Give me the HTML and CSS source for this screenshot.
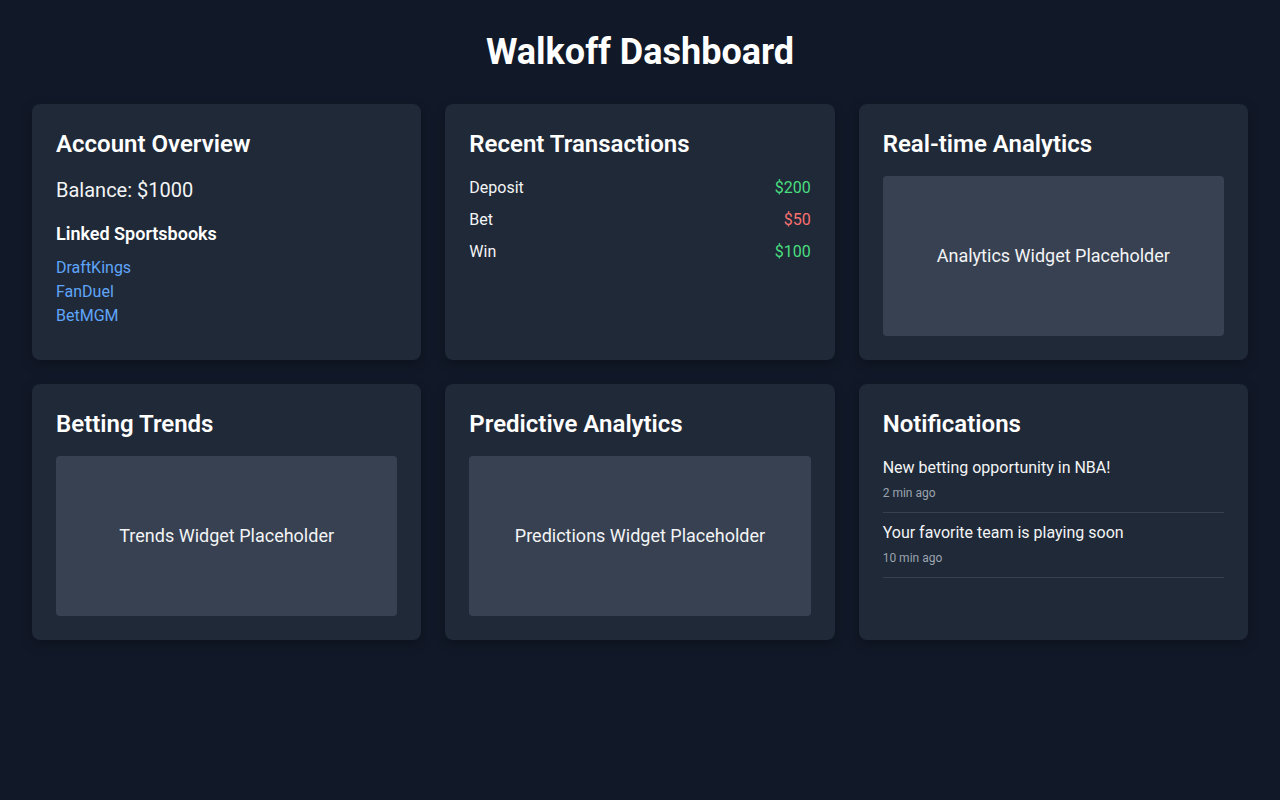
FILE: index.html
```html
<!DOCTYPE html>
<html lang="en">
<head>
    <meta charset="UTF-8">
    <meta name="viewport" content="width=device-width, initial-scale=1.0">
    <title>Walkoff Dashboard</title>
    <link rel="stylesheet" href="styles.css">
</head>
<body>
    <div class="page">
        <h1 class="page-title">Walkoff Dashboard</h1>

        <div class="grid">
            <!-- Account -->
            <div class="card">
                <h2>Account Overview</h2>
                <p class="balance">Balance: $1000</p>
                <h3>Linked Sportsbooks</h3>
                <ul class="book-list">
                    <li><a href="#">DraftKings</a></li>
                    <li><a href="#">FanDuel</a></li>
                    <li><a href="#">BetMGM</a></li>
                </ul>
            </div>

            <!-- Transactions -->
            <div class="card">
                <h2>Recent Transactions</h2>
                <ul class="tx-list">
                    <li><span>Deposit</span><span class="plus">$200</span></li>
                    <li><span>Bet</span><span class="minus">$50</span></li>
                    <li><span>Win</span><span class="plus">$100</span></li>
                </ul>
            </div>

            <div class="card">
                <h2>Real-time Analytics</h2>
                <div class="widget">Analytics Widget Placeholder</div>
            </div>

            <div class="card">
                <h2>Betting Trends</h2>
                <div class="widget">Trends Widget Placeholder</div>
            </div>

            <div class="card">
                <h2>Predictive Analytics</h2>
                <div class="widget">Predictions Widget Placeholder</div>
            </div>

            <!-- Notifications -->
            <div class="card">
                <h2>Notifications</h2>
                <ul class="notif-list">
                    <li>
                        <p>New betting opportunity in NBA!</p>
                        <span class="time">2 min ago</span>
                    </li>
                    <li>
                        <p>Your favorite team is playing soon</p>
                        <span class="time">10 min ago</span>
                    </li>
                </ul>
            </div>
        </div>
    </div>
</body>
</html>
```

FILE: styles.css
```css
* {
    margin: 0;
    padding: 0;
    box-sizing: border-box;
}

body {
    font-family: Roboto, "Liberation Sans", sans-serif;
    line-height: 1.5;
    background-color: #111827;
    color: #f3f4f6;
    min-height: 100vh;
}

.page {
    padding: 32px;
}

.page-title {
    text-align: center;
    font-size: 36px;
    line-height: 40px;
    font-weight: 700;
    color: #fff;
    margin-bottom: 32px;
}

.grid {
    display: grid;
    grid-template-columns: repeat(3, 1fr);
    gap: 24px;
}

.card {
    background-color: #1f2937;
    border-radius: 8px;
    padding: 24px;
    box-shadow: 0 4px 12px rgba(0, 0, 0, 0.25);
    min-height: 256px;
}

.card h2 {
    font-size: 24px;
    line-height: 32px;
    font-weight: 600;
    color: #fff;
    margin-bottom: 16px;
}

.balance {
    font-size: 20px;
    line-height: 28px;
    margin-bottom: 16px;
}

.card h3 {
    font-size: 18px;
    line-height: 28px;
    font-weight: 600;
    color: #fff;
    margin-bottom: 8px;
}

.book-list {
    list-style: none;
}

.book-list a {
    color: #60a5fa;
    text-decoration: none;
    font-size: 16px;
    line-height: 24px;
}

.tx-list {
    list-style: none;
}

.tx-list li {
    display: flex;
    justify-content: space-between;
    margin-bottom: 8px;
}

.plus {
    color: #4ade80;
}

.minus {
    color: #f87171;
}

.widget {
    height: 160px;
    background-color: #374151;
    border-radius: 4px;
    display: flex;
    align-items: center;
    justify-content: center;
    font-size: 18px;
    line-height: 28px;
    padding-bottom: 1px;
    color: #f3f4f6;
}

.notif-list {
    list-style: none;
}

.notif-list li {
    border-bottom: 1px solid #374151;
    padding-bottom: 10px;
    margin-bottom: 8px;
}

.notif-list p {
    margin-bottom: 4px;
}

.time {
    font-size: 12px;
    line-height: 18px;
    color: #9ca3af;
    display: block;
}
```
